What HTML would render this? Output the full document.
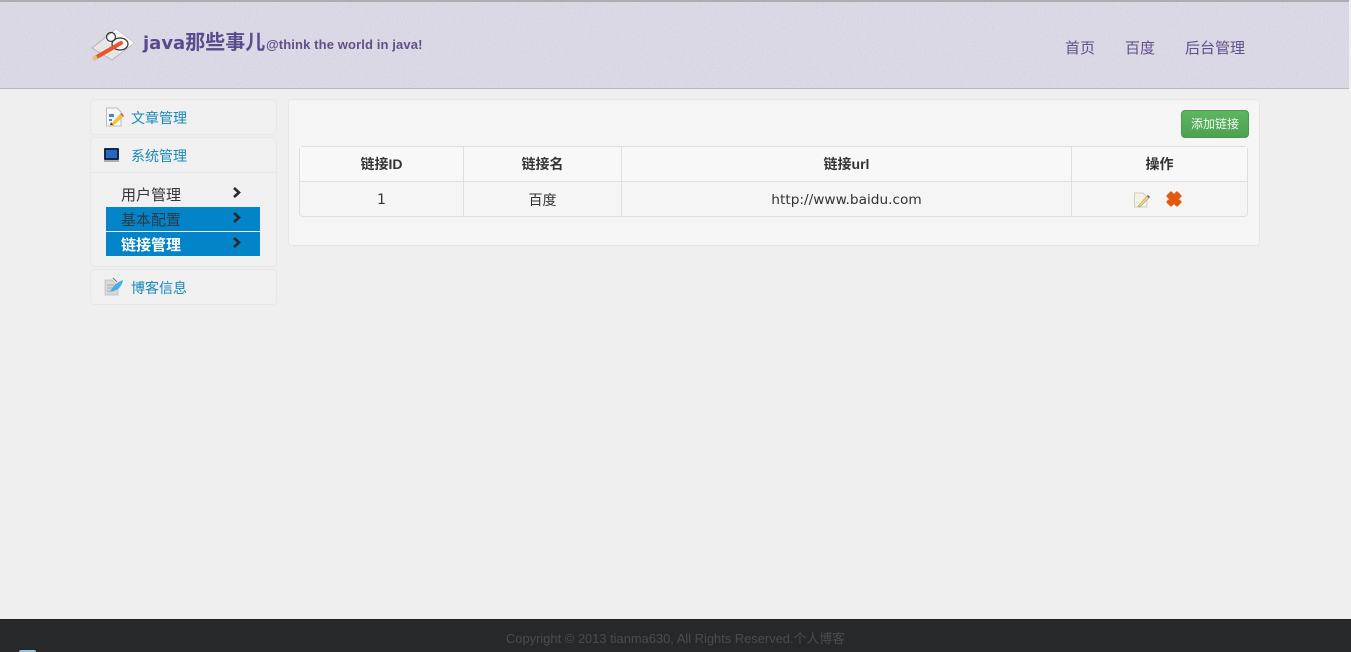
<!DOCTYPE html>
<html lang="zh"><head><meta charset="utf-8"><title>java那些事儿</title>
<style>
*{box-sizing:border-box}
html,body{margin:0;padding:0}
body{width:1351px;height:652px;position:relative;overflow:hidden;background:#efefef;font-family:"Liberation Sans","WenQuanYi Zen Hei","Noto Sans CJK SC",sans-serif;font-size:14px;color:#333}
.a{position:absolute;white-space:nowrap}
#hd{left:0;top:0;width:1349px;height:89px;background:#dcd9e6;border-top:2px solid #aeacb0;border-bottom:1px solid #b9b7bd}
.box{position:absolute;left:90px;width:187px;background:#f0f0f0;border:1px solid #e7e7e7;border-radius:4px}
.lnk{color:#1b87b8;font-size:14px;line-height:16px}
.sub{left:106px;width:154px;height:24px;background:#0384c8}
.it{left:121px;font-size:15px;line-height:17px}
.ch{position:absolute;left:231px}
#main{left:288px;top:99px;width:972px;height:147px;background:#f5f5f5;border:1px solid #e6e6e6;border-radius:4px}
#btn{left:1181px;top:110px;width:68px;height:28px;border-radius:4px;background:linear-gradient(#5eb562,#4da24f);border:1px solid #4a994c;color:#f2f8f2;font-size:12px;line-height:27px;text-align:center}
table{position:absolute;left:299px;top:146px;width:949px;height:71px;border-collapse:separate;border-spacing:0;border:1px solid #dfdfdf;border-radius:4px;table-layout:fixed;font-size:14px;color:#333}
td,th{text-align:center;padding:0;border-left:1px solid #dfdfdf}
td{padding-top:2px}
td:first-child,th:first-child{border-left:0}
th{height:35px;border-bottom:1px solid #dfdfdf;background:#f8f8f8;font-size:14px;font-weight:bold;padding-bottom:0}
.dj{font-family:"DejaVu Sans","Noto Sans CJK SC",sans-serif}
#ft{left:0;top:619px;width:1351px;height:33px;background:#272829;border-top:1px solid #1f2021}
</style></head><body>
<div class="a" id="hd"></div>
<svg class="a" style="left:0;top:2px" width="1349" height="86"><filter id="n" x="0" y="0" width="100%" height="100%"><feTurbulence type="fractalNoise" baseFrequency=".55" numOctaves="2" seed="4"/><feColorMatrix values="0 0 0 0 .55  0 0 0 0 .53  0 0 0 0 .6  0 0 0 1.600 -.72"/></filter><rect width="1349" height="86" filter="url(#n)" opacity=".4"/></svg>
<svg class="a" style="left:90px;top:26px" width="46" height="38" viewBox="0 0 46 38">
<path d="M2 22 26 3 44 17 22 34Z" fill="#e6e6e6" stroke="#b5b5b5"/>
<path d="M26 3 44 17 30 27 15 13Z" fill="#f8f8f8"/>
<circle cx="21" cy="11" r="4.500" fill="none" stroke="#333" stroke-width="1.200"/>
<ellipse cx="30" cy="18" rx="8" ry="6" fill="none" stroke="#333" stroke-width="1.200"/>
<path d="M5 32 31 17" stroke="#e8562a" stroke-width="4" stroke-linecap="round"/>
<path d="M3 33 7 31" stroke="#e4c27a" stroke-width="4"/>
</svg>
<div class="a" style="left:143px;top:30px;font-size:20px;line-height:26px;font-weight:bold;color:#5a4a8e"><span class="dj" style="font-size:18px">java</span>那些事儿</div>
<div class="a" style="left:266px;top:37px;font-size:13px;line-height:16px;font-weight:bold;color:#5f5088;letter-spacing:.12px">@think the world in java!</div>
<div class="a" style="left:1065px;top:40px;font-size:15px;line-height:17px;color:#5f5088">首页</div>
<div class="a" style="left:1125px;top:40px;font-size:15px;line-height:17px;color:#5f5088">百度</div>
<div class="a" style="left:1185px;top:40px;font-size:15px;line-height:17px;color:#5f5088">后台管理</div>

<div class="box" style="top:99px;height:36px"></div>
<div class="box" style="top:137px;height:130px"></div>
<div class="a" style="left:91px;top:172px;width:185px;height:1px;background:#e6e6e6"></div>
<div class="box" style="top:269px;height:36px"></div>
<svg class="a" style="left:104px;top:107px" width="20" height="20" viewBox="0 0 20 20"><path d="M2.500 1H13L17 5V19H2.500Z" fill="#f8f8f8" stroke="#bbb"/><path d="M5 7h5v3H5z" fill="#4a86c8"/><path d="M5 12h3v2H5z" fill="#4a86c8"/><path d="M6 18 16 7l3 3-10 9Z" fill="#f0c33c"/><path d="M16 7l2-1 2 3-1 1Z" fill="#e0624a"/><path d="M6 18l1-3 2 3Z" fill="#443"/></svg>
<svg class="a" style="left:103px;top:147px" width="17" height="17" viewBox="0 0 17 17"><rect x="1" y="1" width="15" height="12" rx="1" fill="#14264a"/><rect x="3" y="3" width="11" height="8" fill="#2468c0"/><path d="M1 13h15v2H1z" fill="#a9acb0"/></svg>
<svg class="a" style="left:104px;top:277px" width="20" height="20" viewBox="0 0 20 20"><path d="M1 3H8L14 9V18H1Z" fill="#d8d8d8" stroke="#bbb" stroke-width=".7"/><path d="M3 8h7M3 11h7M3 14h7" stroke="#aaa"/><path d="M6 15C9 8 14 5 19 3 18 9 14 14 8 14Z" fill="#47aee6"/><path d="M9 1l4 4" stroke="#777"/></svg>
<div class="a lnk" style="left:131px;top:110px">文章管理</div>
<div class="a lnk" style="left:131px;top:148px">系统管理</div>
<div class="a lnk" style="left:131px;top:280px">博客信息</div>

<div class="a sub" style="top:207px"></div>
<div class="a sub" style="top:232px"></div>
<div class="a it" style="top:187px;color:#333">用户管理</div>
<div class="a it" style="top:212px;color:#2d3a48">基本配置</div>
<div class="a it" style="top:237px;color:#fff;font-weight:bold">链接管理</div>
<svg class="ch" style="top:186px" width="12" height="13" viewBox="0 0 12 13"><path d="M3 2 8 6.500 3 11" fill="none" stroke="#2a2a2a" stroke-width="2.600"/></svg>
<svg class="ch" style="top:211px" width="12" height="13" viewBox="0 0 12 13"><path d="M3 2 8 6.500 3 11" fill="none" stroke="#2a2a2a" stroke-width="2.600"/></svg>
<svg class="ch" style="top:236px" width="12" height="13" viewBox="0 0 12 13"><path d="M3 2 8 6.500 3 11" fill="none" stroke="#2a2a2a" stroke-width="2.600"/></svg>

<div class="a" id="main"></div>
<div class="a" id="btn">添加链接</div>
<table>
<colgroup><col style="width:163px"><col style="width:158px"><col style="width:450px"><col></colgroup>
<tr><th>链接ID</th><th>链接名</th><th>链接url</th><th>操作</th></tr>
<tr><td class="dj">1</td><td>百度</td><td class="dj" style="font-size:13.700px">http://www.baidu.com</td><td></td></tr>
</table>
<svg class="a" style="left:1133px;top:192px" width="17" height="16" viewBox="0 0 17 16"><path d="M1.500 1H10L14 5V15H1.500Z" fill="#f4f2e6" stroke="#cfcfc8"/><path d="M6 13 14 4l2 2-8 8-3 1Z" fill="#e8d27a" stroke="#a08a4a" stroke-width=".5"/><path d="M14 4l1-1 2 2-1 1Z" fill="#8a3e8e"/></svg>
<svg class="a" style="left:1165px;top:190px" width="18" height="18" viewBox="0 0 18 18"><path d="M3 6 6 3 9 6 12 3 15 6 12 9 15 12 12 15 9 12 6 15 3 12 6 9Z" fill="#e2590f" stroke="#e2590f" stroke-width="3" stroke-linejoin="round"/></svg>

<div class="a" id="ft"></div>
<div class="a" style="left:506px;top:631px;font-size:12.900px;line-height:15px;color:#4b4c4d">Copyright © 2013 tianma630, All Rights Reserved.个人博客</div>
<div class="a" style="left:19px;top:650px;width:17px;height:2px;background:#8fc4e6;border-radius:8px 8px 0 0"></div>
</body></html>
